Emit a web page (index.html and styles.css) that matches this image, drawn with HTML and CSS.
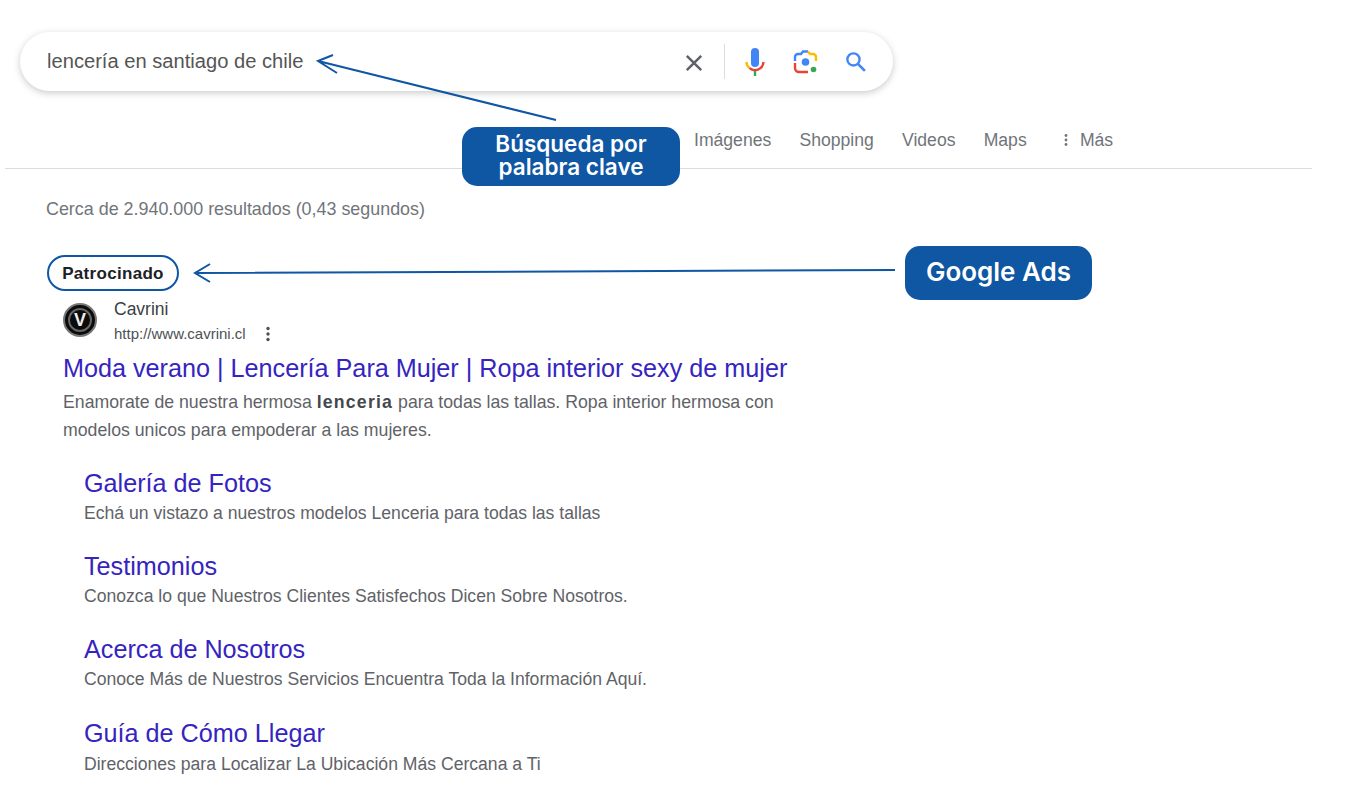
FILE: index.html
```html
<!DOCTYPE html>
<html lang="es">
<head>
  <meta charset="UTF-8" />
  <title>lencería en santiago de chile</title>
  <link rel="stylesheet" href="styles.css">
</head>
<body>
  <!-- Barra de busqueda -->
  <div class="search-bar">
    <span class="query">lencería en santiago de chile</span>
    <svg class="icon icon-clear" width="18" height="18" viewBox="0 0 20 20"><path d="M2 2l16 16M18 2L2 18" stroke="#5f6368" stroke-width="2.800" fill="none"/></svg>
    <span class="sep"></span>
    <svg class="icon icon-mic" width="22" height="28" viewBox="0 0 22 28">
      <rect x="7" y="0" width="8" height="19" rx="4" fill="#4285f4"/>
      <path d="M2.500 14a8.500 8.500 0 0 0 3 6.200" stroke="#fbbc04" stroke-width="2.400" fill="none"/>
      <path d="M5.500 20.200a8.500 8.500 0 0 0 11 0a8.500 8.500 0 0 0 3-6.200" stroke="#ea4335" stroke-width="2.400" fill="none"/>
      <rect x="9.800" y="23" width="2.400" height="5" fill="#34a853"/>
    </svg>
    <svg class="icon icon-lens" width="26" height="24" viewBox="0 0 26 24">
      <path d="M2 11V7a3 3 0 0 1 3-3h3l2-2.500h5" stroke="#4285f4" stroke-width="2.400" fill="none"/>
      <path d="M15 1.500l2 2.500h3a3 3 0 0 1 3 3v4" stroke="#fbbc04" stroke-width="2.400" fill="none"/>
      <path d="M2 13v5a4 4 0 0 0 4 4h9" stroke="#ea4335" stroke-width="2.400" fill="none"/>
      <circle cx="12.500" cy="12" r="3.800" fill="#4285f4"/>
      <circle cx="20.500" cy="19.500" r="2.800" fill="#34a853"/>
    </svg>
    <svg class="icon icon-search" width="22" height="22" viewBox="0 0 26 26">
      <circle cx="10" cy="10" r="7.200" stroke="#4285f4" stroke-width="2.800" fill="none"/>
      <path d="M15.500 15.500l8 8" stroke="#4285f4" stroke-width="3.200" fill="none"/>
    </svg>
  </div>

  <!-- Pestanas -->
  <nav class="tabs">
    <span>Imágenes</span>
    <span>Shopping</span>
    <span>Videos</span>
    <span>Maps</span>
    <span class="more"><svg width="4" height="14" viewBox="0 0 4 14"><circle cx="2" cy="2.500" r="1.400" fill="#70757a"/><circle cx="2" cy="7" r="1.400" fill="#70757a"/><circle cx="2" cy="11.500" r="1.400" fill="#70757a"/></svg>Más</span>
  </nav>
  <div class="divider"></div>

  <div class="stats">Cerca de 2.940.000 resultados (0,43 segundos)</div>

  <div class="sponsored">Patrocinado</div>

  <!-- Anuncio -->
  <div class="ad">
    <div class="ad-head">
      <div class="favicon"><span>V</span></div>
      <div class="ad-site">
        <div class="site-name">Cavrini</div>
        <div class="site-url">http://www.cavrini.cl
          <svg width="4" height="16" viewBox="0 0 4 16"><circle cx="2" cy="2.500" r="1.700" fill="#4d5156"/><circle cx="2" cy="8" r="1.700" fill="#4d5156"/><circle cx="2" cy="13.500" r="1.700" fill="#4d5156"/></svg>
        </div>
      </div>
    </div>
    <a class="ad-title">Moda verano | Lencería Para Mujer | Ropa interior sexy de mujer</a>
    <p class="ad-desc">Enamorate de nuestra hermosa <b>lenceria</b> para todas las tallas. Ropa interior hermosa con modelos unicos para empoderar a las mujeres.</p>

    <div class="sitelinks">
      <div class="sitelink">
        <a>Galería de Fotos</a>
        <p>Echá un vistazo a nuestros modelos Lenceria para todas las tallas</p>
      </div>
      <div class="sitelink">
        <a>Testimonios</a>
        <p>Conozca lo que Nuestros Clientes Satisfechos Dicen Sobre Nosotros.</p>
      </div>
      <div class="sitelink">
        <a>Acerca de Nosotros</a>
        <p>Conoce Más de Nuestros Servicios Encuentra Toda la Información Aquí.</p>
      </div>
      <div class="sitelink last">
        <a>Guía de Cómo Llegar</a>
        <p>Direcciones para Localizar La Ubicación Más Cercana a Ti</p>
      </div>
    </div>
  </div>

  <!-- Anotaciones encima de la captura -->
  <svg class="arrows" width="1345" height="800" viewBox="0 0 1345 800">
    <path d="M556 120L318 61M333 55L318 61L337 73" stroke="#0f56a3" stroke-width="2" fill="none"/>
    <path d="M895 270L195 273M210 264L195 273L210 282" stroke="#0f56a3" stroke-width="2" fill="none"/>
  </svg>
  <div class="callout callout-search"><span>Búsqueda por</span><span>palabra clave</span></div>
  <div class="callout callout-ads">Google Ads</div>
</body>
</html>
```

FILE: styles.css
```css
body {
  margin: 0;
  background: #fff;
  font-family: "Liberation Sans", Arial, sans-serif;
  position: relative;
  height: 800px;
  overflow: hidden;
}
/* Barra de busqueda */
.search-bar {
  display: flex;
  align-items: center;
  width: 873px;
  height: 59px;
  margin: 32px 0 0 20px;
  border-radius: 30px;
  background: #fff;
  box-shadow: 0 2px 7px rgba(60, 64, 67, 0.28);
}
.query {
  flex: 1;
  padding-left: 27px;
  font-size: 20.150px;
  color: #555;
}
.icon {
  flex: none;
}
.icon-clear {
  margin-right: 21px;
  margin-top: 2px;
}
.sep {
  width: 1px;
  height: 35px;
  background: #dadce0;
  margin-right: 19px;
}
.icon-mic {
  margin-right: 27px;
}
.icon-lens {
  margin-right: 26px;
}
.icon-search {
  margin-right: 26px;
}
/* Pestanas */
.tabs {
  display: flex;
  gap: 28.200px;
  height: 30px;
  margin-top: 34px;
  padding-left: 694px;
  font-size: 17.600px;
  line-height: 30px;
  color: #70757a;
}
.more {
  display: flex;
  align-items: center;
  gap: 12px;
  margin-left: 9px;
}
.divider {
  height: 1px;
  width: 1307px;
  margin: 13px 0 0 5px;
  background: #dadce0;
}
.stats {
  margin: 28px 0 0 46px;
  font-size: 17.900px;
  line-height: 24px;
  color: #70757a;
}
.sponsored {
  box-sizing: border-box;
  width: 132px;
  height: 36px;
  margin: 34px 0 0 47px;
  border: 2px solid #0f56a3;
  border-radius: 18px;
  background: #fff;
  font-size: 17px;
  font-weight: bold;
  letter-spacing: 0.300px;
  line-height: 33px;
  text-align: center;
  color: #202124;
}
/* Anuncio */
.ad {
  margin: 7px 0 0 63px;
  width: 740px;
}
.ad-head {
  display: flex;
  align-items: center;
  gap: 17px;
  height: 46px;
}
.favicon {
  width: 34px;
  height: 34px;
  margin-top: -3px;
  border-radius: 50%;
  background: #0b0b0b;
  border: 2px solid #777;
  box-sizing: border-box;
  display: flex;
  align-items: center;
  justify-content: center;
}
.favicon span {
  display: block;
  width: 24px;
  height: 24px;
  border: 2px solid #666;
  box-sizing: border-box;
  border-radius: 50%;
  color: #eee;
  font-size: 18px;
  font-weight: bold;
  line-height: 20px;
  text-align: center;
}
.site-name {
  margin-top: 1px;
  font-size: 17.500px;
  line-height: 20px;
  color: #3c4043;
}
.site-url {
  display: flex;
  align-items: center;
  gap: 20px;
  margin-top: 5px;
  font-size: 15px;
  line-height: 20px;
  color: #4d5156;
}
.ad-title {
  display: block;
  margin-top: 8px;
  font-size: 25.200px;
  line-height: 32px;
  color: #3524c0;
}
.ad-desc {
  margin: 4px 0 0;
  font-size: 17.700px;
  line-height: 28px;
  color: #5f6368;
}
.ad-desc b {
  letter-spacing: 1.200px;
  color: #45484c;
}
.sitelinks {
  margin: 24px 0 0 21px;
  display: flex;
  flex-direction: column;
  gap: 26px;
}
.sitelink a {
  display: block;
  font-size: 25.200px;
  line-height: 30px;
  color: #3524c0;
}
.sitelink p {
  margin: 3px 0 0;
  font-size: 17.600px;
  line-height: 24px;
  color: #5f6368;
}
.sitelink.last {
  margin-top: 1px;
}
.sitelink.last p {
  margin-top: 4px;
}
/* Anotaciones */
.arrows {
  position: absolute;
  top: 0;
  left: 0;
  pointer-events: none;
}
.callout {
  position: absolute;
  display: flex;
  align-items: center;
  justify-content: center;
  box-sizing: border-box;
  background: #0f56a3;
  color: #fff;
  font-family: Inter, sans-serif;
  font-weight: 600;
  text-align: center;
}
.callout-search {
  flex-direction: column;
  left: 462px;
  top: 127px;
  width: 218px;
  height: 59px;
  padding-bottom: 3px;
  border-radius: 15px;
  font-size: 22.500px;
  line-height: 23px;
}
.callout-ads {
  left: 905px;
  top: 246px;
  width: 187px;
  height: 54px;
  padding-bottom: 3px;
  border-radius: 15px;
  font-size: 26px;
}
```
